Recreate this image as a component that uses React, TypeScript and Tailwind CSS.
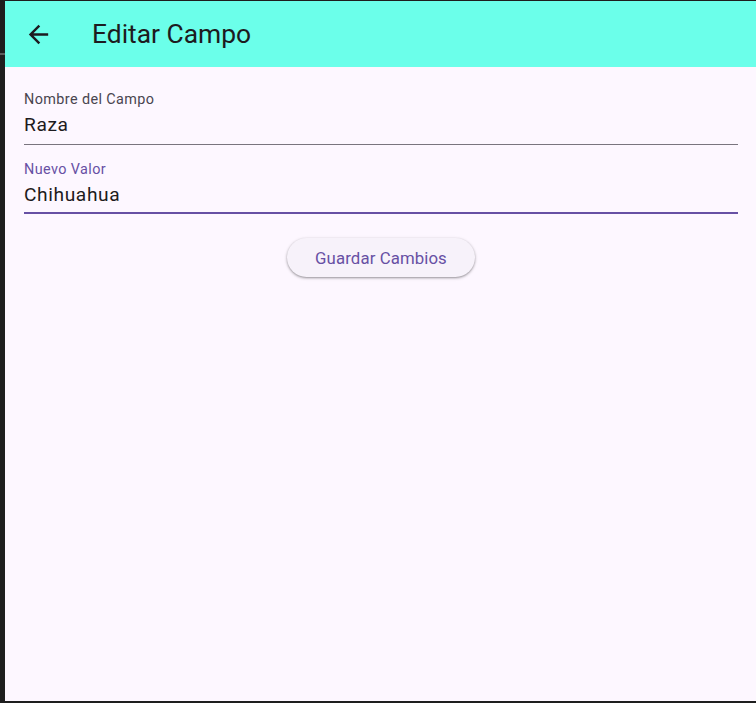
import React from "react";

export default function App() {
  return (
    <div
      className="relative flex h-[703px] w-[756px] flex-col bg-[#1e1e1e] pl-[5px] pt-[1px] pb-[2px]"
      style={{ fontFamily: "Roboto, 'Noto Sans', sans-serif" }}
    >
      <div className="absolute left-0 top-[53px] h-[2px] w-[5px] bg-[#5c5c5c]" />
      <header className="flex h-[66px] shrink-0 items-center bg-[#6bffea]">
        <div className="ml-[19px] flex h-[29px] w-[29px] items-center justify-center">
          <svg width="29" height="29" viewBox="0 0 24 24" fill="#1d1b20">
            <path d="M20 11H7.83l5.59-5.59L12 4l-8 8 8 8 1.41-1.41L7.83 13H20v-2z" />
          </svg>
        </div>
        <h1 className="ml-[39px] text-[26.4px] font-normal leading-[32px] text-[#1d1b20]">
          Editar Campo
        </h1>
      </header>
      <main className="flex flex-1 flex-col bg-[#fdf7ff] pl-[19px] pr-[18px] pt-[24px]">
        <div className="border-b border-[#79747e] pb-[8px]">
          <div className="h-[17px] text-[14.4px] leading-[17px] tracking-[0.4px] text-[#49454f]">
            Nombre del Campo
          </div>
          <div className="mt-[5px] text-[19.2px] leading-[23px] tracking-[0.6px] text-[#1d1b20]">
            Raza
          </div>
        </div>
        <div className="mt-[16px] border-b-2 border-[#6750a4] pb-[6px]">
          <div className="h-[17px] text-[14.4px] leading-[17px] tracking-[0.4px] text-[#6750a4]">
            Nuevo Valor
          </div>
          <div className="mt-[5px] text-[19.2px] leading-[23px] tracking-[0.6px] text-[#1d1b20]">
            Chihuahua
          </div>
        </div>
        <div className="mt-[24px] flex justify-center">
          <button className="flex h-[39px] w-[188px] items-center justify-center rounded-full bg-[#f7f2fa] text-[16.8px] leading-[20px] tracking-[0.1px] text-[#6750a4] shadow-[0_1px_2px_rgba(0,0,0,0.3),0_1px_3px_1px_rgba(0,0,0,0.1)]">
            Guardar Cambios
          </button>
        </div>
      </main>
    </div>
  );
}
